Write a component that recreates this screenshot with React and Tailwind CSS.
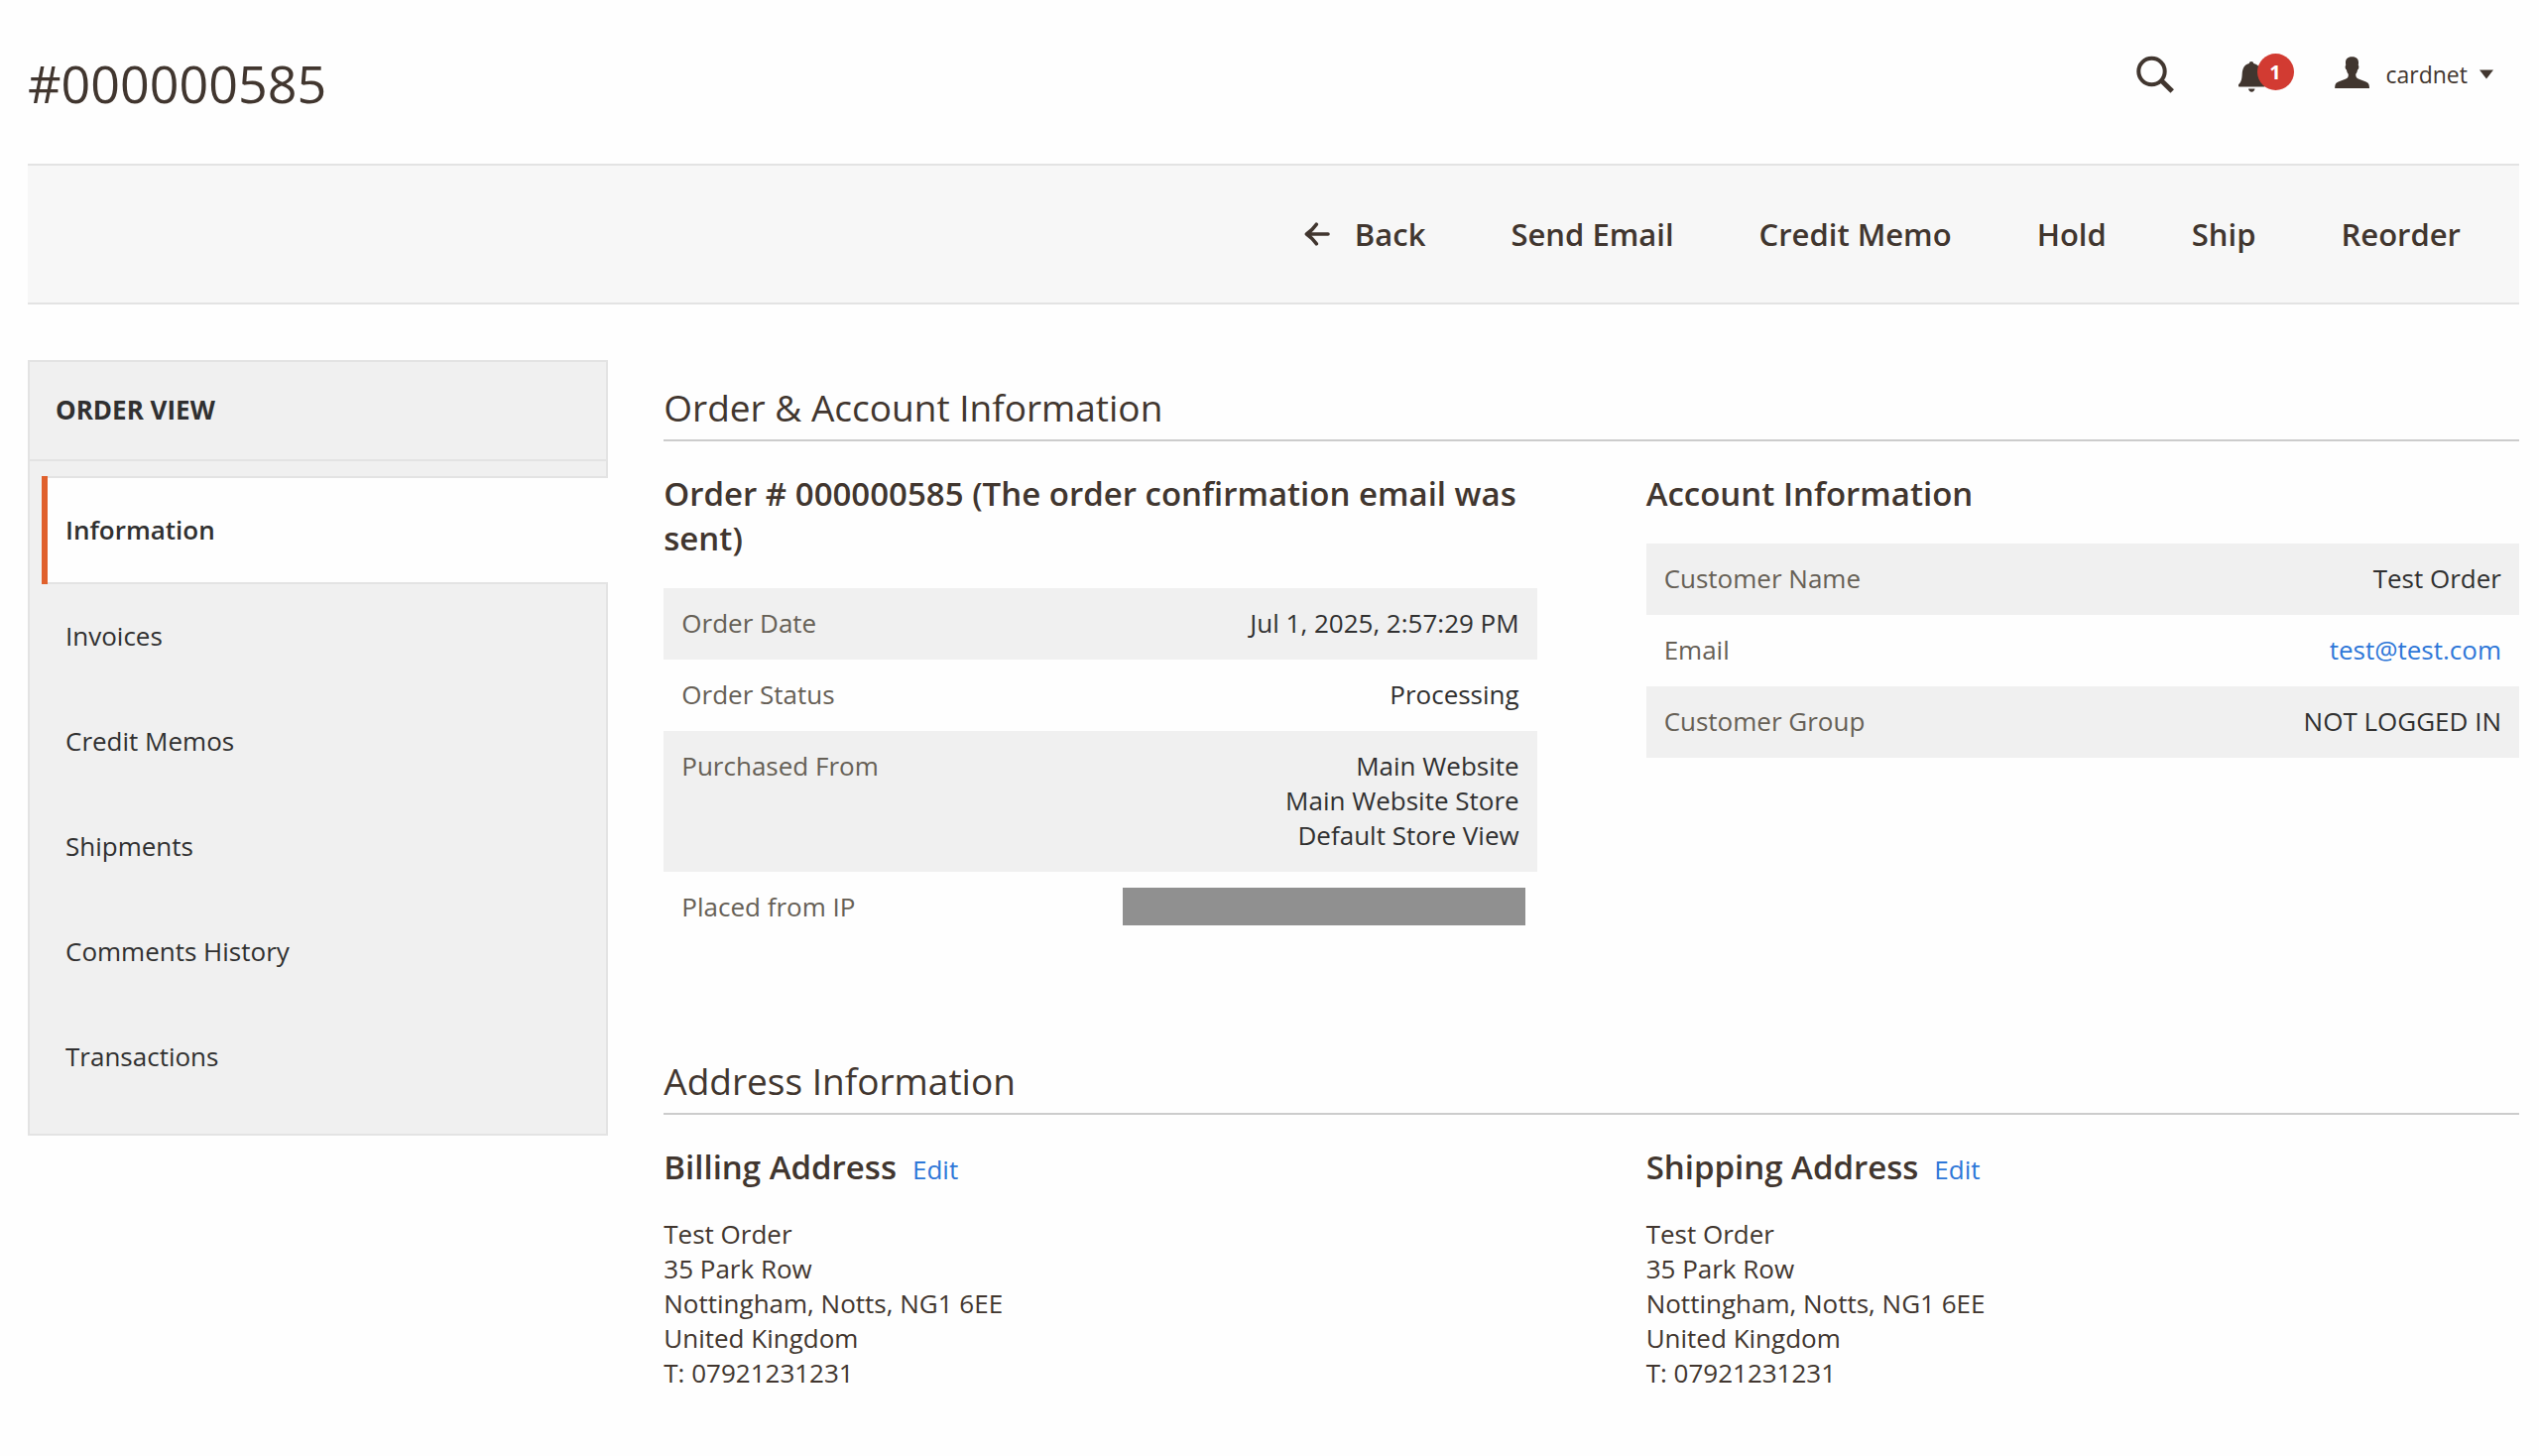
import React from "react";

const actions = ["Send Email", "Credit Memo", "Hold", "Ship", "Reorder"];

const tabs = ["Invoices", "Credit Memos", "Shipments", "Comments History", "Transactions"];

const address = [
  "Test Order",
  "35 Park Row",
  "Nottingham, Notts, NG1 6EE",
  "United Kingdom",
  "T: 07921231231",
];

function SearchIcon() {
  return (
    <svg width="38" height="38" viewBox="0 0 38 38" fill="none" stroke="currentColor" aria-hidden="true">
      <circle cx="15.5" cy="16" r="13.200" strokeWidth="4" />
      <path d="M25 25 L36.200 36" strokeWidth="5" />
    </svg>
  );
}

function BellIcon() {
  return (
    <svg width="28" height="38" viewBox="0 0 28 38" fill="currentColor" aria-hidden="true">
      <path d="M13 6c1.3 0 2.200.9 2.200 2.100 5 1.100 7.300 5 7.600 10.400.3 5.500 1.200 8.500 3.700 10.400.4.4.3 2.600-.4 2.600H.5c-.8 0-.8-2.200-.3-2.600 2.500-1.900 3.200-4.900 3.500-10.400.3-5.400 2.300-9.300 7.100-10.400C10.800 6.900 11.700 6 13 6z" />
      <path d="M10 33.500h6.500c-.2 2-1.500 3.200-3.200 3.200S10.200 35.500 10 33.500z" />
    </svg>
  );
}

function UserIcon() {
  return (
    <svg width="36" height="38" viewBox="0 0 36 38" fill="currentColor" aria-hidden="true">
      <path d="M17.500 1.200c4.600 0 6.700 2.300 6.500 6.300l-.2 2.500c.9.300.7 3.700-.7 4.300-.4 2.200-1 3.500-1.900 4.500.1 3 .8 4 3.300 5l6.500 2.400c3 1.200 4 2.600 4 6.800H.2c0-4.200 1-5.600 4-6.800l6.500-2.400c2.500-1 3.200-2 3.100-5-.9-1-1.500-2.300-1.900-4.500-1.400-.6-1.600-4-.7-4.300L11 7.500c-.2-4 1.900-6.300 6.500-6.300z" />
    </svg>
  );
}

function BackIcon() {
  return (
    <svg
      width="26"
      height="24"
      viewBox="0 0 26 24"
      fill="none"
      stroke="currentColor"
      strokeWidth="3.6"
      strokeLinecap="round"
      strokeLinejoin="round"
      aria-hidden="true"
    >
      <path d="M12.300 2.200 C9 7 6 9.500 2.400 12 C6 14.500 9 17 12.300 21.800 M3 12 H24" />
    </svg>
  );
}

function InfoTable({ rows }) {
  return (
    <table className="w-full">
      <tbody>
        {rows.map(([label, value]) => (
          <tr key={label} className="align-top odd:bg-[#f0f0f0]">
            <th scope="row" className="px-[18px] pt-[18px] pb-[19px] text-left font-normal text-[#666056]">
              {label}
            </th>
            <td className="px-[18px] pt-[18px] pb-[19px] text-right text-[#303030]">{value}</td>
          </tr>
        ))}
      </tbody>
    </table>
  );
}

function SectionTitle({ children }) {
  return (
    <h2 className="border-b-2 border-[#cccccc] pb-[7px] text-[37px] leading-[50px]">{children}</h2>
  );
}

function AddressCard({ title }) {
  return (
    <div>
      <div className="flex items-baseline gap-4">
        <h3 className="text-[33px] leading-[45px] font-semibold">{title}</h3>
        <a href="#edit" className="text-[#2e77d8]">Edit</a>
      </div>
      <address className="mt-7 not-italic">
        {address.map((line) => (
          <div key={line}>{line}</div>
        ))}
      </address>
    </div>
  );
}

export default function App() {
  return (
    <div className="min-h-screen bg-[#fefefe] pr-5 pl-7 font-['Open_Sans',sans-serif] text-[26px] leading-[35px] text-[#41362f]">
      <header className="flex items-start justify-between pt-[49px] pb-[46px]">
        <h1 className="text-[52px] leading-[70px]">#000000585</h1>
        <div className="flex items-center pt-[7px] pr-[26px]">
          <button type="button" aria-label="Search" className="mr-[65px]">
            <SearchIcon />
          </button>
          <button type="button" aria-label="Notifications" className="relative mr-[41px] w-14">
            <BellIcon />
            <span className="absolute -top-[2px] right-0 flex size-[37px] items-center justify-center rounded-full bg-[#d23b32] text-[20px] leading-none font-bold text-white">
              1
            </span>
          </button>
          <button type="button" className="flex items-center">
            <UserIcon />
            <span className="mr-3 ml-4 text-[23px] leading-8">cardnet</span>
            <svg width="14" height="10" viewBox="0 0 14 10" fill="currentColor" aria-hidden="true">
              <path d="M0 0.500 H14 L7 9.500 Z" />
            </svg>
          </button>
        </div>
      </header>

      <div className="flex items-center justify-end gap-[86px] border-y-2 border-[#e3e3e3] bg-[#f7f7f7] py-[49px] pr-[59px] text-[31px] leading-10 font-semibold">
        <button type="button" className="flex items-center gap-[25px]">
          <BackIcon />
          Back
        </button>
        {actions.map((label) => (
          <button key={label} type="button">{label}</button>
        ))}
      </div>

      <div className="mt-14 flex items-start gap-14">
        <nav
          aria-label="Order view"
          className="w-[23.3%] shrink-0 border-2 border-[#e3e3e3] bg-[#f0f0f0] pb-6 text-[#303030]"
        >
          <div className="border-b-2 border-[#e3e3e3] px-[26px] pt-[31px] pb-8 font-bold uppercase">
            Order View
          </div>
          <ul className="mt-[15px] pl-3">
            <li className="-mr-[2px] flex">
              <span className="w-[6px] bg-[#e0602c]" />
              <a
                href="#information"
                aria-current="page"
                className="flex-1 border-y-2 border-[#e3e3e3] bg-[#fefefe] py-[35px] pl-[18px] font-semibold"
              >
                Information
              </a>
            </li>
            {tabs.map((label) => (
              <li key={label}>
                <a href="#tab" className="block pt-[35px] pb-9 pl-6">{label}</a>
              </li>
            ))}
          </ul>
        </nav>

        <main className="flex-1">
          <section className="pt-[23px]">
            <SectionTitle>Order &amp; Account Information</SectionTitle>
            <div className="mt-[30px] grid grid-cols-2 gap-[110px]">
              <div>
                <h3 className="mb-7 text-[33px] leading-[45px] font-semibold">
                  Order # 000000585 (The order confirmation email was sent)
                </h3>
                <InfoTable
                  rows={[
                    ["Order Date", "Jul 1, 2025, 2:57:29 PM"],
                    ["Order Status", "Processing"],
                    [
                      "Purchased From",
                      <>
                        Main Website
                        <br />
                        Main Website Store
                        <br />
                        Default Store View
                      </>,
                    ],
                    [
                      "Placed from IP",
                      <div className="-mt-[2px] -mr-[6px] ml-auto h-[38px] w-[406px] bg-[#909090]" />,
                    ],
                  ]}
                />
              </div>
              <div>
                <h3 className="mb-7 text-[33px] leading-[45px] font-semibold">Account Information</h3>
                <InfoTable
                  rows={[
                    ["Customer Name", "Test Order"],
                    [
                      "Email",
                      <a href="mailto:test@test.com" className="text-[#2e77d8]">
                        test@test.com
                      </a>,
                    ],
                    ["Customer Group", "NOT LOGGED IN"],
                  ]}
                />
              </div>
            </div>
          </section>

          <section className="mt-[113px]">
            <SectionTitle>Address Information</SectionTitle>
            <div className="mt-[30px] grid grid-cols-2 gap-[110px]">
              <AddressCard title="Billing Address" />
              <AddressCard title="Shipping Address" />
            </div>
          </section>
        </main>
      </div>
    </div>
  );
}
